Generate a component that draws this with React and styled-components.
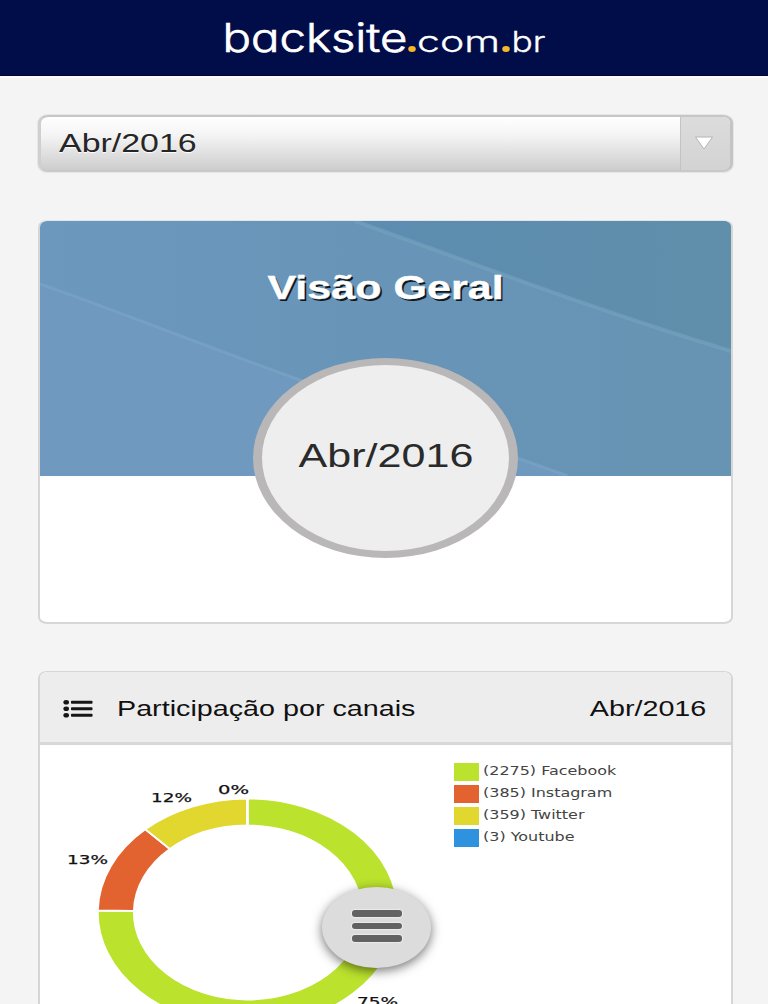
import React, { useState } from 'react'
import styled, { createGlobalStyle } from 'styled-components'

const GlobalStyle = createGlobalStyle`
  * {
    box-sizing: border-box;
  }
  body {
    margin: 0;
    background: #f4f4f4;
    color: #1c1c1c;
    font-family: "Liberation Sans", Arial, sans-serif;
  }
`

const Page = styled.div`
  height: 1004px;
  overflow: hidden;
  display: flex;
  flex-direction: column;
`

const TopBar = styled.header`
  flex: none;
  height: 76px;
  display: flex;
  justify-content: center;
  background: #000d48;
  border-bottom: 1px solid #00062c;
  box-shadow: 0 2px 0 #fafaff;
`

const Content = styled.main`
  flex: none;
  display: flex;
  flex-direction: column;
  gap: 48px;
  padding: 39px 35px 0 38px;
`

// wide lettering used all over the page
const Wide = styled.span`
  display: block;
  white-space: nowrap;
  font-size: ${props => props.$size}px;
  line-height: 1.15;
  transform: scaleX(${props => props.$stretch || 1.305});
  transform-origin: ${props => props.$origin || 'left'} center;
`

const Select = styled.button`
  display: flex;
  align-items: stretch;
  width: 100%;
  height: 57px;
  padding: 0;
  font-family: inherit;
  color: #262626;
  text-align: left;
  background: linear-gradient(#fff 0%, #f4f4f4 35%, #cdcdcd 100%);
  border: 2px solid #c6c6c6;
  border-left: 3px solid #cfcfcf;
  border-right: 3px solid #c4c4c4;
  border-bottom-color: #c9c9c9;
  border-radius: 10px / 8px;
  box-shadow: 0 0 0 1px #e6e6e6, 0 1px 1px #e3e3e3;
  overflow: hidden;
`

const SelectValue = styled.span`
  flex: 1;
  display: flex;
  align-items: center;
  padding: 1px 0 0 18px;
  text-shadow: 0 1px 1px #fff;
`

const SelectArrow = styled.span`
  width: 50px;
  display: flex;
  align-items: center;
  justify-content: center;
  padding: 0 3px 2px 0;
  background: linear-gradient(#dcdcdc, #d3d3d3);
  border-left: 1px solid #c3c3c3;
`

const Card = styled.section`
  flex: none;
  background: #fff;
  border: 2px solid #d6d6d6;
  border-top-width: 1px;
  border-radius: 9px / 7px;
  overflow: hidden;
`

const OverviewCard = styled(Card)`
  height: 404px;
  margin-bottom: -1px;
  border-top-color: #dfe6ea;
`

const Cover = styled.div`
  position: relative;
  height: 255px;
  display: flex;
  flex-direction: column;
  align-items: center;
  padding-top: 48px;
`

const CoverArt = styled.svg`
  position: absolute;
  inset: 0;
  width: 100%;
  height: 100%;
`

const Title = styled.h1`
  position: relative;
  margin: 0;
  color: #fff;
  -webkit-text-stroke: 0.4px #fff;
  text-shadow: 1.5px 2px 0 #101820;
`

const Period = styled.div`
  position: relative;
  flex: none;
  margin-top: 51px;
  width: 265px;
  height: 200px;
  display: flex;
  align-items: center;
  justify-content: center;
  padding-bottom: 4px;
  background: #eee;
  border: 7px solid #b9b7b8;
  border-left-width: 9px;
  border-right-width: 9px;
  border-radius: 50%;
  color: #2a2a2a;
`

const CardHeader = styled.div`
  height: 73px;
  display: flex;
  align-items: center;
  padding: 3px 25px 0 23px;
  background: #ededed;
  border-bottom: 3px solid #d8d8d8;
  color: #111;
`

const CardTitle = styled.div`
  flex: 1;
  padding-left: 24px;
`

const ChartRow = styled.div`
  display: flex;
  height: 300px;
  overflow: hidden;
`

const Legend = styled.ul`
  list-style: none;
  margin: 0;
  padding: 18px 0 0 14px;
  display: flex;
  flex-direction: column;
  gap: 4px;
`

const LegendItem = styled.li`
  display: flex;
  align-items: center;
  height: 18px;
  gap: 4px;
  color: #444;
  font-family: "DejaVu Sans", Verdana, sans-serif;
`

const LegendText = styled(Wide)`
  padding-bottom: 1px;
`

const Swatch = styled.span`
  width: 25px;
  height: 18px;
  background: ${props => props.$color};
`

const MenuButton = styled.button`
  position: fixed;
  left: 322px;
  top: 887px;
  width: 109px;
  height: 81px;
  display: flex;
  flex-direction: column;
  align-items: center;
  justify-content: center;
  gap: 6px;
  padding: 0 0 3px;
  border: 0;
  border-radius: 50%;
  background: #dcdcdc;
  box-shadow: 0 3px 11px rgba(0, 0, 0, 0.55);
`

const MenuBar = styled.span`
  width: 50px;
  height: 6.5px;
  border-radius: 3px;
  background: #626262;
  box-shadow: 0 0 1px 1px #ececec;
`

const channels = [
  { name: 'Facebook', total: 2275, color: '#bbe22d', label: { text: '75%', x: 357, y: 1006, w: 41 } },
  { name: 'Instagram', total: 385, color: '#e2632f', label: { text: '13%', x: 67, y: 863.5, w: 41 } },
  { name: 'Twitter', total: 359, color: '#e2d72e', label: { text: '12%', x: 151, y: 801.5, w: 41 } },
  { name: 'Youtube', total: 3, color: '#2e92df', label: { text: '0%', x: 218, y: 794, w: 31 } },
]

const point = (ratio, rx, ry) => {
  const angle = ratio * 2 * Math.PI
  return `${247.8 + rx * Math.sin(angle)} ${912.5 - ry * Math.cos(angle)}`
}

const slicePath = (from, to) => {
  const large = to - from > 0.5 ? 1 : 0
  return `M ${point(from, 150, 114)} A 150 114 0 ${large} 1 ${point(to, 150, 114)}
    L ${point(to, 114, 87)} A 114 87 0 ${large} 0 ${point(from, 114, 87)} Z`
}

function Logo() {
  return (
    <svg width="340" height="75" viewBox="214 0 340 75">
      <g fill="#fff" stroke="#fff" strokeWidth="0.7" fontFamily="Inter, sans-serif" fontWeight="300" style={{ fontFeatureSettings: '"cv11"' }}>
        <text x="222.5" y="52" fontSize="39" textLength="185" lengthAdjust="spacingAndGlyphs">backsite</text>
        <text x="417" y="52" fontSize="29" strokeWidth="0.3" textLength="83" lengthAdjust="spacingAndGlyphs">com</text>
        <text x="511.5" y="52" fontSize="29" strokeWidth="0.3" textLength="34" lengthAdjust="spacingAndGlyphs">br</text>
      </g>
      <ellipse cx="412" cy="49" rx="3.8" ry="3" fill="#f7b62c" />
      <ellipse cx="506" cy="49" rx="3.8" ry="3" fill="#f7b62c" />
    </svg>
  )
}

function CoverBackground() {
  return (
    <CoverArt viewBox="40 221 691 255" preserveAspectRatio="none">
      <defs>
        <linearGradient id="base" x1="0" y1="0" x2="1" y2="0">
          <stop offset="0" stopColor="#6c98bd" />
          <stop offset="0.5" stopColor="#6894b8" />
          <stop offset="1" stopColor="#6794b2" />
        </linearGradient>
        <linearGradient id="corner" x1="0" y1="0" x2="1" y2="0">
          <stop offset="0" stopColor="#5c8cb0" />
          <stop offset="1" stopColor="#608fab" />
        </linearGradient>
      </defs>
      <rect x="40" y="221" width="691" height="255" fill="url(#base)" />
      <path d="M40 284 C120 312 200 344 300 380 C400 415 480 445 568 476 L40 476 Z" fill="#7099bf" />
      <path d="M355 221 C470 262 600 312 731 351 L731 221 Z" fill="url(#corner)" />
      <path d="M40 284 C120 312 200 344 300 380 C400 415 480 445 568 476" fill="none" stroke="#7ba5c8" strokeWidth="3" opacity="0.6" />
      <path d="M355 221 C470 262 600 312 731 351" fill="none" stroke="#74a2bf" strokeWidth="4" opacity="0.65" />
    </CoverArt>
  )
}

function ListIcon() {
  return (
    <svg width="30" height="20" viewBox="0 0 30 20">
      {[3.3, 9.8, 16.3].map(y => (
        <g key={y} fill="#161616">
          <ellipse cx="3.2" cy={y} rx="2.8" ry="2.3" />
          <rect x="8" y={y - 1.5} width="21.5" height="3" rx="0.8" />
        </g>
      ))}
    </svg>
  )
}

function Donut() {
  const total = channels.reduce((sum, ele) => sum + ele.total, 0)
  let sum = 0

  return (
    <svg width="400" height="260" viewBox="40 745 400 260">
      {channels.map(ele => {
        const from = sum / total
        sum += ele.total
        return <path key={ele.name} d={slicePath(from, sum / total)} fill={ele.color} stroke="#fff" strokeWidth="1.8" />
      })}
      {channels.map(({ label }) => (
        <text
          key={label.text}
          x={label.x}
          y={label.y}
          fontSize="13"
          fontFamily="DejaVu Sans, Verdana, sans-serif"
          fill="#111"
          stroke="#111"
          strokeWidth="0.25"
          textLength={label.w}
          lengthAdjust="spacingAndGlyphs"
        >
          {label.text}
        </text>
      ))}
    </svg>
  )
}

function App() {

  const [ period ] = useState('Abr/2016')

  return (
    <Page>
      <GlobalStyle />
      <TopBar>
        <Logo />
      </TopBar>
      <Content>
        <Select type="button">
          <SelectValue>
            <Wide $size={26}>{period}</Wide>
          </SelectValue>
          <SelectArrow>
            <svg width="20" height="14" viewBox="0 0 20 14">
              <path d="M1.5 1 H18.5 L10 13 Z" fill="#fff" stroke="#b5b5b5" strokeWidth="1" />
            </svg>
          </SelectArrow>
        </Select>

        <OverviewCard>
          <Cover>
            <CoverBackground />
            <Title>
              <Wide $size={33} $origin="center">Visão Geral</Wide>
            </Title>
            <Period>
              <Wide $size={33} $origin="center">{period}</Wide>
            </Period>
          </Cover>
        </OverviewCard>

        <Card>
          <CardHeader>
            <ListIcon />
            <CardTitle>
              <Wide $size={22}>Participação por canais</Wide>
            </CardTitle>
            <Wide $size={22} $origin="right">{period}</Wide>
          </CardHeader>
          <ChartRow>
            <Donut />
            <Legend>
              {channels.map(ele => (
                <LegendItem key={ele.name}>
                  <Swatch $color={ele.color} />
                  <LegendText $size={12} $stretch={1.33}>({ele.total}) {ele.name}</LegendText>
                </LegendItem>
              ))}
            </Legend>
          </ChartRow>
        </Card>
      </Content>
      <MenuButton type="button" aria-label="Menu">
        <MenuBar />
        <MenuBar />
        <MenuBar />
      </MenuButton>
    </Page>
  )

}

export default App
